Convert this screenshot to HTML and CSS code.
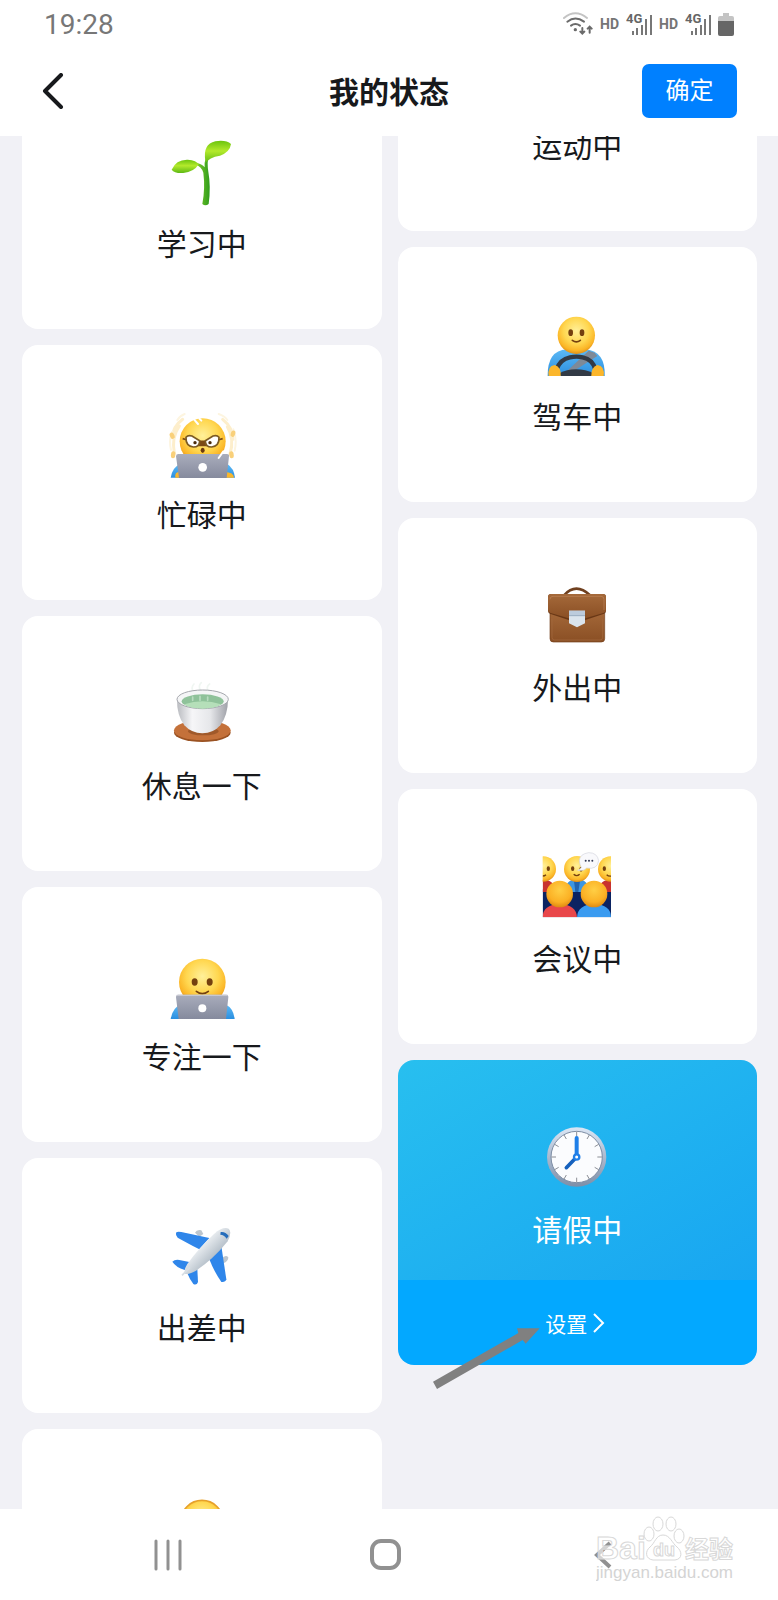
FILE: index.html
```html
<!DOCTYPE html>
<html lang="zh-CN">
<head>
    <meta charset="UTF-8">
    <meta name="viewport" content="width=device-width, initial-scale=1.0">
    <title>我的状态</title>
    <link rel="stylesheet" href="styles.css">
</head>
<body>
    <!-- Shared gradients -->
    <svg class="defs" width="0" height="0" aria-hidden="true">
        <defs>
            <radialGradient id="face" cx="50%" cy="38%" r="62%">
                <stop offset="0" stop-color="#fff09a"/>
                <stop offset="0.55" stop-color="#ffd750"/>
                <stop offset="0.85" stop-color="#fbb526"/>
                <stop offset="1" stop-color="#e08f16"/>
            </radialGradient>
            <radialGradient id="head" cx="50%" cy="35%" r="65%">
                <stop offset="0" stop-color="#ffcf45"/>
                <stop offset="0.7" stop-color="#fbb024"/>
                <stop offset="1" stop-color="#e08a12"/>
            </radialGradient>
            <linearGradient id="leaf" x1="0" y1="0" x2="0" y2="1">
                <stop offset="0" stop-color="#6cc40e"/>
                <stop offset="0.45" stop-color="#b4ea2c"/>
                <stop offset="1" stop-color="#5cb814"/>
            </linearGradient>
            <linearGradient id="stem" x1="0" y1="0" x2="1" y2="0">
                <stop offset="0" stop-color="#86cf2a"/>
                <stop offset="1" stop-color="#2f9c1c"/>
            </linearGradient>
            <linearGradient id="laptop" x1="0" y1="0" x2="0" y2="1">
                <stop offset="0" stop-color="#a9adbc"/>
                <stop offset="1" stop-color="#858a9d"/>
            </linearGradient>
            <linearGradient id="shirt" x1="0" y1="0" x2="0" y2="1">
                <stop offset="0" stop-color="#5db9f5"/>
                <stop offset="1" stop-color="#2b8fe0"/>
            </linearGradient>
            <linearGradient id="cup" x1="0" y1="0" x2="1" y2="0">
                <stop offset="0" stop-color="#b9bbc0"/>
                <stop offset="0.3" stop-color="#f6f6f8"/>
                <stop offset="0.65" stop-color="#e6e7ea"/>
                <stop offset="1" stop-color="#9fa1a8"/>
            </linearGradient>
            <linearGradient id="leather" x1="0" y1="0" x2="0" y2="1">
                <stop offset="0" stop-color="#a5693a"/>
                <stop offset="1" stop-color="#8a4f24"/>
            </linearGradient>
            <linearGradient id="plane" x1="0" y1="0" x2="1" y2="1">
                <stop offset="0.3" stop-color="#f7f9fb"/>
                <stop offset="0.7" stop-color="#a9b5c0"/>
            </linearGradient>
            <linearGradient id="rim" x1="0" y1="0" x2="0" y2="1">
                <stop offset="0" stop-color="#dbe6f5"/>
                <stop offset="1" stop-color="#7d8ea8"/>
            </linearGradient>
        </defs>
    </svg>

    <div class="status-bar">
        <span class="time">19:28</span>
        <div class="indicators">
            <svg width="30" height="24" viewBox="519 30 90 72" fill="none" stroke-width="6" stroke-linecap="round">
                <path d="M522 48 Q556 20 591 48" stroke="#c4c4c4"/>
                <path d="M532 59 Q556 40 582 59M543 71 Q556 61 570 71" stroke="#6b6b6b"/>
                <circle cx="556" cy="83" r="5" fill="#6b6b6b"/>
                <path d="M577 78v16M571 89l6 6 6-6M599 92V74M593 80l6-6 6 6" stroke="#6b6b6b" stroke-width="6"/>
            </svg>
            <span class="hd">HD</span>
            <svg class="signal" width="26" height="24" viewBox="0 0 26 24">
                <text x="0" y="11">4G</text>
                <path d="M7 19v4M11 16v7M16 13v10M20 7v16M25 3v20"/>
            </svg>
            <span class="hd">HD</span>
            <svg class="signal" width="26" height="24" viewBox="0 0 26 24">
                <text x="0" y="11">4G</text>
                <path d="M7 19v4M11 16v7M16 13v10M20 7v16M25 3v20"/>
            </svg>
            <svg width="16" height="24" viewBox="0 0 16 24">
                <path d="M5 1h6v3h3q2 0 2 2v4H0V6q0-2 2-2h3z" fill="#c4c4c4"/>
                <path d="M0 9h16v13q0 2-2 2H2q-2 0-2-2z" fill="#666"/>
            </svg>
        </div>
    </div>

    <header class="navbar">
        <button class="back" type="button" aria-label="返回">
            <svg width="24" height="36" viewBox="0 0 24 36">
                <path d="M20 2 4 18 20 34"/>
            </svg>
        </button>
        <h1>我的状态</h1>
        <button class="confirm" type="button">确定</button>
    </header>

    <main class="status-list">
        <div class="column column-left">
            <button class="card" type="button">
                <svg class="emoji" viewBox="81 21 210 210">
                    <path d="M187 222 Q196 175 190 128 Q184 108 166 104 L168 99 Q186 101 194 112 Q192 92 201 84 L205 88 Q201 100 205 125 Q213 170 206 222 Q196 230 187 222z" fill="url(#stem)"/>
                    <path d="M95 119 Q108 88 143 89 Q170 91 176 103 Q162 126 130 129 Q104 131 95 119z" fill="url(#leaf)"/>
                    <path d="M196 92 Q188 42 226 34 Q258 29 273 42 Q270 66 240 77 Q207 82 196 100z" fill="url(#leaf)"/>
                </svg>
                <span class="label">学习中</span>
            </button>

            <button class="card" type="button">
                <svg class="emoji" viewBox="81 24 210 210">
                    <path d="M92 233 Q98 200 122 192 L262 192 Q282 205 285 233z" fill="url(#shirt)"/>
                    <path d="M106 233q-3-18 14-18v18zM282 233q0-16-28-18v18z" fill="#f9b62c"/>
                    <g fill="none" stroke-linecap="round">
                        <path d="M128 58Q98 80 98 112M118 78Q94 110 103 160M248 58Q278 82 279 118M262 80Q284 116 270 162" stroke="#fdeecb" stroke-width="9"/>
                        <path d="M96 96q-10 24-3 54M280 88q12 30 4 64M112 60q10-14 22-18M236 42q18 6 26 18" stroke="#fdf5e0" stroke-width="6"/>
                        <path d="M95 104l3 6M100 160l-1 8M274 160l1 8M280 98l-2 6" stroke="#f9d07a" stroke-width="13"/>
                    </g>
                    <circle cx="188" cy="124" r="69" fill="url(#face)"/>
                    <path d="M160 56l14 16M178 56l6 6" stroke="#fff" stroke-width="6" stroke-linecap="round"/>
                    <path d="M172 124h32v12h-32zM128 116l14 4M248 116l-14 4" fill="#7b4b16" stroke="#7b4b16" stroke-width="5"/>
                    <g fill="#fff" stroke="#7b5a24" stroke-width="5">
                        <path d="M138 112 Q144 104 156 108 L179 122 Q179 141 160 141 Q137 139 138 112z"/>
                        <path d="M237 112 Q231 104 219 108 L196 122 Q196 141 215 141 Q238 139 237 112z"/>
                    </g>
                    <circle cx="165" cy="128" r="5" fill="#4a2b0b"/>
                    <circle cx="210" cy="128" r="5" fill="#4a2b0b"/>
                    <ellipse cx="188" cy="151" rx="6" ry="8" fill="#6b3a10"/>
                    <path d="M108 169q0-7 7-7h146q7 0 6 7l-7 65H117z" fill="url(#laptop)"/>
                    <path d="M236 174l14-20" stroke="#fff" stroke-width="6" stroke-linecap="round"/>
                    <circle cx="188" cy="202" r="13" fill="#fff"/>
                </svg>
                <span class="label">忙碌中</span>
            </button>

            <button class="card" type="button">
                <svg class="emoji" viewBox="81 27 210 210">
                    <path d="M160 66q-8-14 2-24M182 62q-9-14 2-24M205 64q-8-14 4-22" fill="none" stroke="#f0f6f2" stroke-width="5" stroke-linecap="round"/>
                    <ellipse cx="187" cy="188" rx="85" ry="28" fill="#9a5222"/>
                    <ellipse cx="187" cy="181" rx="85" ry="30" fill="#c4713a"/>
                    <ellipse cx="190" cy="184" rx="46" ry="12" fill="#a0592a"/>
                    <path d="M111 86 Q110 135 133 166 Q155 190 187 190 Q220 190 241 166 Q264 135 264 86z" fill="url(#cup)"/>
                    <ellipse cx="188" cy="88" rx="77" ry="28" fill="#f4f5f6" stroke="#a6a8ae" stroke-width="3"/>
                    <ellipse cx="188" cy="94" rx="63" ry="21" fill="#8fc29a"/>
                    <path d="M133 103 Q188 84 243 103 Q225 116 188 116 Q149 116 133 103z" fill="#b5dfb9"/>
                    <path d="M158 91v-10M180 91v-12M203 91v-10" stroke="#b9dcc0" stroke-width="5" stroke-linecap="round"/>
                </svg>
                <span class="label">休息一下</span>
            </button>

            <button class="card" type="button">
                <svg class="emoji" viewBox="81 30 210 210">
                    <path d="M92 237 Q98 202 122 194 L258 194 Q280 204 284 237z" fill="url(#shirt)"/>
                    <circle cx="187" cy="126" r="70" fill="url(#face)"/>
                    <ellipse cx="164" cy="126" rx="9" ry="11" fill="#74400f"/>
                    <ellipse cx="209" cy="126" rx="9" ry="11" fill="#74400f"/>
                    <path d="M169 154 Q187 168 205 154" fill="none" stroke="#74400f" stroke-width="5" stroke-linecap="round"/>
                    <path d="M108 172q0-8 7-8h144q7 0 6 8l-7 65H116z" fill="url(#laptop)"/>
                    <path d="M110 166h153" stroke="#c6c8d2" stroke-width="4"/>
                    <circle cx="187" cy="205" r="12" fill="#fff"/>
                </svg>
                <span class="label">专注一下</span>
            </button>

            <button class="card" type="button">
                <svg class="emoji" viewBox="81 33 210 210">
                    <path d="M165 68 Q170 58 184 61 L190 72 L178 80zM244 148 Q256 132 265 142 Q265 154 250 160z" fill="#bdc6ce"/>
                    <path d="M108 68 Q112 63 124 66 L208 84 L178 118 Q140 98 113 83 Q106 76 108 68z" fill="#2f86ea"/>
                    <path d="M244 108 L259 208 Q256 218 244 216 Q222 184 208 148z" fill="#2f86ea"/>
                    <path d="M97 155 Q104 148 118 150 L148 156 L134 180 Q108 172 97 155z" fill="#2f86ea"/>
                    <path d="M172 178 L174 216 Q170 227 160 222 Q148 206 142 190z" fill="#2f86ea"/>
                    <path d="M134 192 Q132 176 142 162 Q178 112 222 72 Q248 49 266 56 Q277 66 263 94 Q220 148 168 182 Q146 194 134 192z" fill="url(#plane)"/>
                    <path d="M242 66 Q256 64 266 78 L260 86 Q252 74 241 74z" fill="#256dbb"/>
                    <path d="M126 196 L150 172" stroke="#d7dee4" stroke-width="5"/>
                </svg>
                <span class="label">出差中</span>
            </button>

            <button class="card" type="button" aria-label="状态">
                <svg class="emoji" viewBox="0 0 210 210">
                    <circle cx="105" cy="88" r="63" fill="url(#face)" stroke="#e6a12b" stroke-width="5"/>
                </svg>
            </button>
        </div>

        <div class="column column-right">
            <button class="card" type="button">
                <svg class="emoji" viewBox="0 0 210 210"></svg>
                <span class="label">运动中</span>
            </button>

            <button class="card" type="button">
                <svg class="emoji" viewBox="96 30 210 210">
                    <path d="M113 228 Q112 152 170 148 L228 148 Q287 155 284 228z" fill="url(#shirt)"/>
                    <path d="M236 152 L254 158 L262 168 L196 210 L168 216z" fill="#7e8a98"/>
                    <path d="M140 208 Q150 178 180 172 Q200 168 218 172 Q248 178 256 208" fill="none" stroke="#323a45" stroke-width="13"/>
                    <path d="M148 220 Q170 208 198 208 Q228 208 250 220 L244 228 L152 228z" fill="#323a45"/>
                    <path d="M116 228 Q112 198 134 195 Q155 202 152 228z" fill="#fbb62b"/>
                    <path d="M281 228 Q285 198 262 195 Q243 202 244 228z" fill="#fbb62b"/>
                    <circle cx="199" cy="106" r="56" fill="url(#face)"/>
                    <ellipse cx="182" cy="98" rx="7" ry="10" fill="#74400f"/>
                    <ellipse cx="216" cy="98" rx="7" ry="10" fill="#74400f"/>
                    <path d="M187 121 Q199 130 211 121" fill="none" stroke="#74400f" stroke-width="5" stroke-linecap="round"/>
                </svg>
                <span class="label">驾车中</span>
            </button>

            <button class="card" type="button">
                <svg class="emoji" viewBox="96 33 210 210">
                    <path d="M162 76 Q198 36 240 76" fill="none" stroke="#70401f" stroke-width="8"/>
                    <path d="M120 120h164v86q0 10-10 10H130q-10 0-10-10z" fill="url(#leather)" stroke="#74401b" stroke-width="2"/>
                    <path d="M126 146v56q0 8 8 8h136q8 0 8-8v-56" fill="none" stroke="#a46a40" stroke-width="2"/>
                    <path d="M114 82q0-10 10-10h154q10 0 10 10v40q0 8-8 10l-54 18h-50l-54-18q-8-2-8-10z" fill="#693715"/>
                    <path d="M114 82q0-10 10-10h154q10 0 10 10v38q0 7-8 9l-54 16h-50l-54-16q-8-2-8-9z" fill="url(#leather)"/>
                    <path d="M120 88q0-9 9-9h144q9 0 9 9v32" fill="none" stroke="#bd8357" stroke-width="2"/>
                    <path d="M177 122h48v38l-24 12-24-12z" fill="#dbe4ed"/>
                    <path d="M177 122h48v15h-48z" fill="#bccbdc"/>
                    <path d="M177 137h48" stroke="#8298ae" stroke-width="2"/>
                </svg>
                <span class="label">外出中</span>
            </button>

            <button class="card" type="button">
                <svg class="emoji" viewBox="96 36 210 210">
                    <clipPath id="room"><path d="M98 36h205v196H98z"/></clipPath>
                    <g clip-path="url(#room)">
                        <path d="M98 148h205v84H98z" fill="#0b2362"/>
                        <path d="M98 120q34-4 40 36H98zM303 120q-34-4-40 36h40z" fill="#c8322f"/>
                        <path d="M164 156q2-38 37-38t38 38z" fill="#3c96e3"/>
                        <path d="M192 122h18l-5 34h-9z" fill="#2264af"/>
                        <circle cx="100" cy="87" r="38" fill="url(#face)"/>
                        <circle cx="302" cy="87" r="38" fill="url(#face)"/>
                        <circle cx="201" cy="87" r="39" fill="url(#face)"/>
                        <g fill="#74400f">
                            <ellipse cx="115" cy="86" rx="5" ry="7"/>
                            <ellipse cx="188" cy="86" rx="5" ry="7"/>
                            <ellipse cx="213" cy="88" rx="5" ry="7"/>
                            <ellipse cx="283" cy="86" rx="5" ry="7"/>
                        </g>
                        <path d="M98 108q6 0 10-4M191 103q9 8 18 0M290 104q6 6 14 4" fill="none" stroke="#74400f" stroke-width="4"/>
                        <path d="M98 232q0-38 51-40 50 2 52 40z" fill="#e9474a"/>
                        <path d="M201 232q2-38 51-40 51 2 51 40z" fill="#3a9bf0"/>
                        <circle cx="149" cy="162" r="40" fill="url(#head)"/>
                        <circle cx="252" cy="162" r="40" fill="url(#head)"/>
                    </g>
                    <path d="M214 82 Q210 90 203 91 Q222 94 230 84 Q262 90 266 62 Q262 38 236 38 Q209 42 208 62 Q209 74 214 82z" fill="#f9f9fc" stroke="#d2d3dc" stroke-width="2"/>
                    <g fill="#333a56">
                        <circle cx="227" cy="62" r="3"/>
                        <circle cx="237" cy="62" r="3"/>
                        <circle cx="247" cy="62" r="3"/>
                    </g>
                </svg>
                <span class="label">会议中</span>
            </button>

            <div class="selected">
                <button class="card card-active" type="button" aria-pressed="true">
                    <svg class="emoji" viewBox="460 219 210 210">
                        <circle cx="564" cy="321" r="89" fill="url(#rim)"/>
                        <circle cx="564" cy="321" r="77" fill="#fbfcfe" stroke="#7d8da4" stroke-width="3"/>
                        <g stroke="#8c8f96" stroke-width="3">
                            <path d="M564 245v14M564 383v14M488 321h14M626 321h14"/>
                            <path d="M526 255l7 12M602 255l-7 12M526 387l7-12M602 387l-7-12"/>
                            <path d="M498 283l12 7M630 283l-12 7M498 359l12-7M630 359l-12-7"/>
                        </g>
                        <path d="M564 321V264" stroke="#1f7fe8" stroke-width="12" stroke-linecap="round"/>
                        <path d="M564 321 533 353" stroke="#1661bd" stroke-width="11" stroke-linecap="round"/>
                        <circle cx="564" cy="321" r="8" fill="#fff" stroke="#1f7fe8" stroke-width="7"/>
                    </svg>
                    <span class="label">请假中</span>
                </button>
                <button class="settings" type="button">
                    设置
                    <svg width="12" height="20" viewBox="0 0 12 20">
                        <path d="M1 1l9 9-9 9"/>
                    </svg>
                </button>
                <svg class="pointer" width="107" height="61" viewBox="128 832 321 183">
                    <path d="M128 993 384 847 380 833 448 833 406 879 397 868 140 1015z" fill="#808080"/>
                </svg>
            </div>
        </div>
    </main>

    <footer class="system-nav">
        <button type="button" aria-label="最近任务">
            <svg class="recents" width="32" height="32" viewBox="0 0 32 32">
                <path d="M4 2v28M16 2v28M28 2v28"/>
            </svg>
        </button>
        <button type="button" aria-label="主页">
            <svg width="32" height="32" viewBox="0 0 32 32">
                <rect x="2" y="2" width="27" height="27" rx="9"/>
            </svg>
        </button>
        <button type="button" aria-label="后退">
            <svg width="32" height="32" viewBox="0 0 32 32">
                <path d="M23 4 10 16 23 28"/>
            </svg>
        </button>
        <svg class="watermark" width="140" height="70" viewBox="0 0 140 70">
            <text class="brand" x="0" y="43">Bai</text>
            <g class="paw">
                <ellipse cx="62" cy="8" rx="5" ry="7"/>
                <ellipse cx="75" cy="8" rx="5" ry="7"/>
                <ellipse cx="53" cy="18" rx="5" ry="7"/>
                <ellipse cx="83" cy="20" rx="5" ry="7"/>
                <path d="M67 19c7 0 9 8 14 12s6 12-2 13H57c-8-1-8-9-3-13s6-12 13-12z"/>
            </g>
            <text class="du" x="57" y="40">du</text>
            <text class="jingyan" x="89" y="42">经验</text>
            <text class="site" x="0" y="62">jingyan.baidu.com</text>
        </svg>
    </footer>
</body>
</html>
```
FILE: styles.css
```css
/* Base Styles */
* {
    margin: 0;
    padding: 0;
    box-sizing: border-box;
}

body {
    display: flex;
    flex-direction: column;
    height: 100vh;
    overflow: hidden;
    background-color: #fff;
    color: #17191c;
    font-family: Roboto, 'Noto Sans CJK SC', sans-serif;
}

button {
    border: none;
    background: none;
    color: inherit;
    font-family: inherit;
    cursor: pointer;
}

svg {
    display: block;
    flex-shrink: 0;
}

.defs {
    position: absolute;
}

/* Phone status bar */
.status-bar {
    display: flex;
    justify-content: space-between;
    align-items: center;
    height: 46px;
    padding: 2px 44px 0;
    color: #777;
}

.time {
    font-size: 28px;
}

.indicators {
    display: flex;
    align-items: center;
    gap: 7px;
}

.hd {
    width: 19px;
    font-size: 14px;
    font-weight: bold;
    color: #757575;
}

.signal text {
    font-size: 13px;
    font-weight: bold;
    fill: #666;
}

.signal path {
    stroke: #777;
    stroke-width: 2;
}

/* Navigation Bar */
.navbar {
    display: grid;
    grid-template-columns: 1fr auto 1fr;
    align-items: center;
    height: 90px;
    padding: 0 41px;
}

.navbar h1 {
    padding-top: 4px;
    font-size: 30px;
    line-height: 40px;
    font-weight: bold;
}

.back {
    justify-self: start;
}

.back path {
    fill: none;
    stroke: #17191c;
    stroke-width: 4;
    stroke-linecap: round;
    stroke-linejoin: round;
}

.confirm {
    justify-self: end;
    width: 95px;
    height: 54px;
    border-radius: 7px;
    background-color: #0080ff;
    color: #fff;
    font-size: 24px;
    line-height: 32px;
}

/* Status cards, list is scrolled part of the way down */
.status-list {
    display: flex;
    flex: 1;
    align-items: flex-start;
    gap: 16px;
    min-height: 0;
    padding: 0 21px 0 22px;
    overflow: hidden;
    background-color: #f1f1f6;
}

.column {
    display: flex;
    flex: 1;
    flex-direction: column;
    gap: 16px;
}

.column-left {
    margin-top: -62px;
}

.column-right {
    margin-top: -160px;
}

.card {
    display: flex;
    flex-direction: column;
    align-items: center;
    gap: 20px;
    width: 100%;
    min-height: 255px;
    padding: 63px 0 66px;
    border-radius: 16px;
    background-color: #fff;
}

.emoji {
    width: 70px;
    height: 70px;
}

.label {
    font-size: 30px;
    line-height: 36px;
}

.selected {
    position: relative;
}

.card-active {
    min-height: 0;
    padding-bottom: 31px;
    border-radius: 16px 16px 0 0;
    background: linear-gradient(150deg, #28bfef, #18a6f1);
    color: #fff;
}

.settings {
    display: flex;
    justify-content: center;
    align-items: center;
    gap: 6px;
    width: 100%;
    height: 85px;
    padding-right: 4px;
    border-radius: 0 0 16px 16px;
    background-color: #03a8ff;
    color: #fff;
    font-size: 21px;
}

.settings path {
    fill: none;
    stroke: #fff;
    stroke-width: 2;
}

.pointer {
    position: absolute;
    left: 35px;
    bottom: -24px;
}

/* System navigation */
.system-nav {
    position: relative;
    display: flex;
    align-items: center;
    height: 91px;
    padding: 0 66px 0 59px;
}

.system-nav button {
    display: flex;
    flex: 1;
    justify-content: center;
}

.system-nav button path,
.system-nav rect {
    fill: none;
    stroke: #919191;
    stroke-width: 4;
}

.system-nav .recents path {
    stroke-width: 3;
    stroke-linecap: round;
}

.watermark {
    position: absolute;
    right: 42px;
    bottom: 14px;
    fill: #fff;
    fill-opacity: 0.6;
    stroke: #d8d8d8;
    stroke-width: 1;
    font-family: 'Liberation Sans', 'Noto Sans CJK SC', sans-serif;
}

.brand {
    font-size: 32px;
    font-weight: bold;
}

.du {
    font-size: 18px;
    font-weight: bold;
}

.jingyan {
    font-size: 24px;
    font-weight: bold;
}

.site {
    font-size: 17px;
    fill: #d4d4d4;
    fill-opacity: 1;
    stroke: none;
}
```
